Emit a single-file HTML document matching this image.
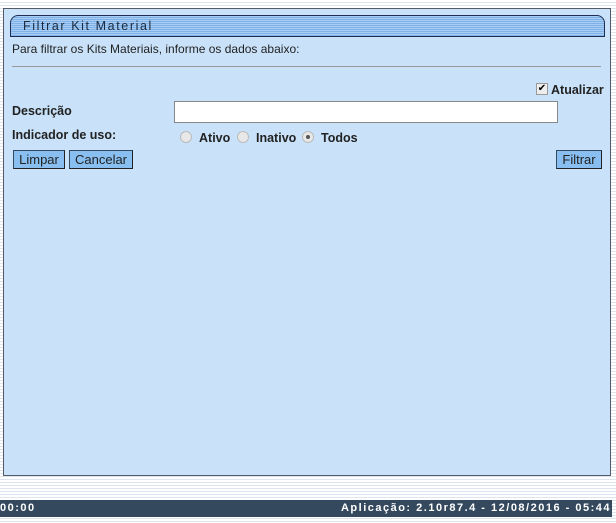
<!DOCTYPE html>
<html><head><style>
body{margin:0;width:616px;height:523px;overflow:hidden;font-family:"Liberation Sans",Arial,sans-serif;font-size:12px;
background:repeating-linear-gradient(#fff 0 2px,#dde6ee 2px 3px);position:relative}
.panel{position:absolute;left:3px;top:8px;width:606px;height:466px;background:#c9e2f9;border:1px solid #555b66}
.tab{position:absolute;left:6px;top:6px;width:593px;height:20px;border:1px solid #1f2d55;border-radius:8px 8px 0 0;
background:repeating-linear-gradient(#a9cdf3 0 1px,#7eb1e7 1px 2px);}
.tab span{position:absolute;left:12px;top:3px;font-size:12.5px;letter-spacing:1.6px;color:#1a2a40}
.t{position:absolute;color:#222}
.b{font-weight:bold;font-size:12.5px}
hr{position:absolute;left:8px;top:57px;width:589px;margin:0;border:0;border-top:1px solid #999}
.btn{position:absolute;top:141px;height:17px;background:#88bff0;border:1px solid #34495e;border-right-color:#222;border-bottom-color:#222;font-size:13px;line-height:17px;text-align:center;color:#222}
.inp{position:absolute;left:170px;top:92px;width:382px;height:20px;background:#fff;border:1px solid #888}
.rad{position:absolute;top:122px;width:10px;height:10px;border-radius:50%;background:#e8e8e8;border:1px solid #bbb}
.foot{position:absolute;left:0;top:500px;width:612px;height:17px;background:#34495e;color:#fff;font-weight:bold;font-size:11px;letter-spacing:1.5px;line-height:17px}
</style></head><body>
<div class="panel">
<div class="tab"><span>Filtrar Kit Material</span></div>
<div class="t" style="left:8px;top:33px">Para filtrar os Kits Materiais, informe os dados abaixo:</div>
<hr>
<div style="position:absolute;left:532px;top:74px;width:10px;height:10px;background:#eee;border:1px solid #999;font-size:10px;line-height:10px;text-align:center">✔</div>
<div class="t b" style="left:547px;top:74px">Atualizar</div>
<div class="t b" style="left:8px;top:95px">Descrição</div>
<div class="inp"></div>
<div class="t b" style="left:8px;top:119px">Indicador de uso:</div>
<div class="rad" style="left:176px"></div><div class="t b" style="left:195px;top:122px">Ativo</div>
<div class="rad" style="left:233px"></div><div class="t b" style="left:252px;top:122px">Inativo</div>
<div class="rad" style="left:298px"><div style="width:4px;height:4px;background:#555;border-radius:50%;margin:3px"></div></div><div class="t b" style="left:317px;top:122px">Todos</div>
<div class="btn" style="left:9px;width:50px">Limpar</div>
<div class="btn" style="left:65px;width:62px">Cancelar</div>
<div class="btn" style="left:552px;width:44px">Filtrar</div>
</div>
<div class="foot"><span style="position:absolute;left:0">00:00</span><span style="position:absolute;right:1px">Aplicação: 2.10r87.4 - 12/08/2016 - 05:44</span></div>
</body></html>
